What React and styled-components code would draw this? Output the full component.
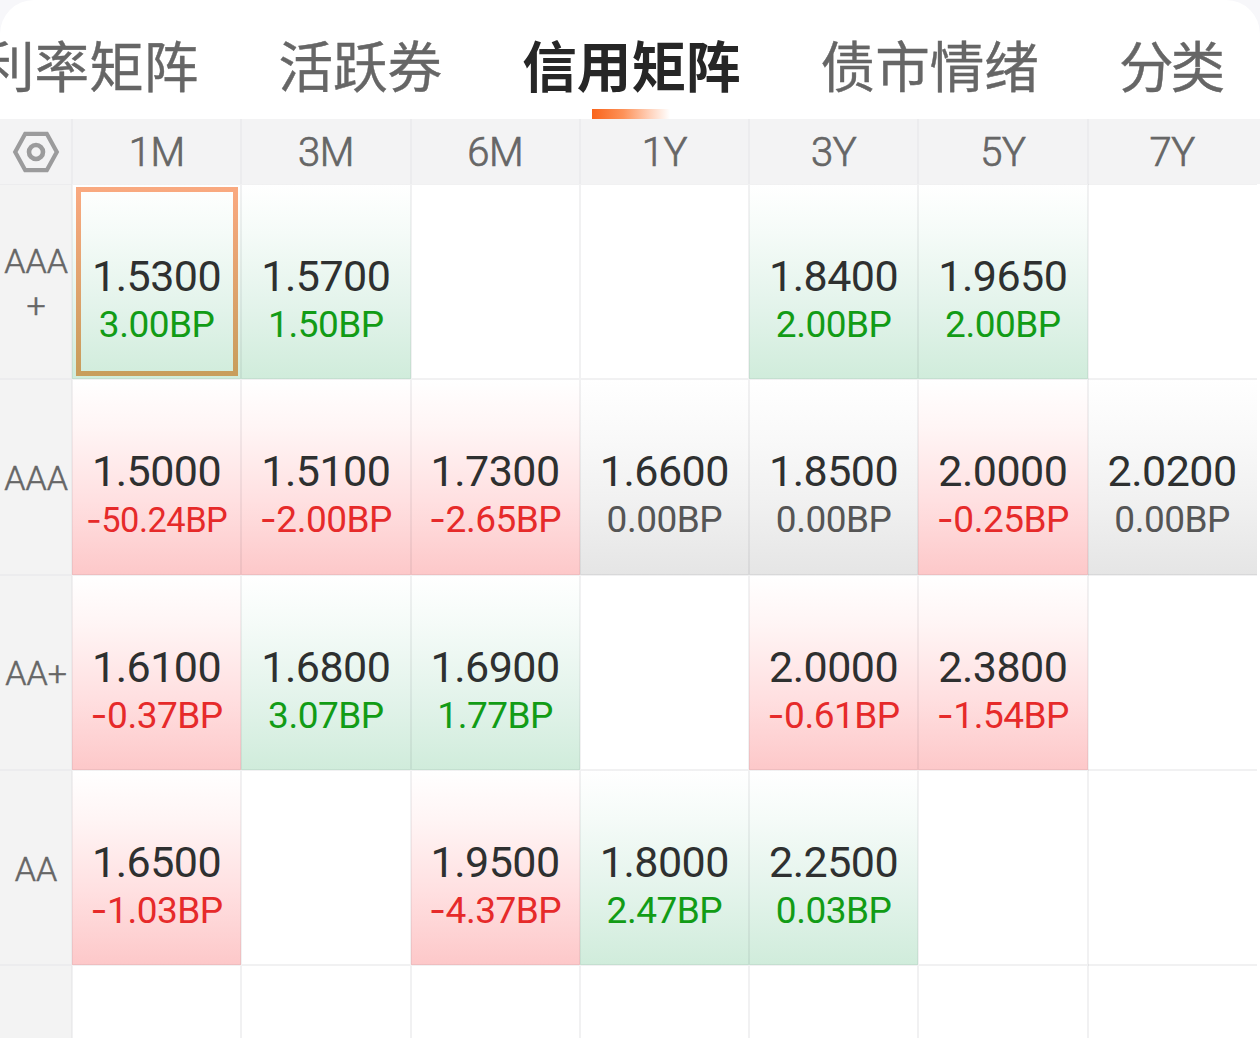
import React from "react";
import styled, { createGlobalStyle, css } from "styled-components";

const TABS = ["利率矩阵", "活跃券", "信用矩阵", "债市情绪", "分类"];
const TERMS = ["1M", "3M", "6M", "1Y", "3Y", "5Y", "7Y"];

const ROWS = [
  {
    label: ["AAA", "+"],
    cells: [["1.5300", "3.00"], ["1.5700", "1.50"], null, null, ["1.8400", "2.00"], ["1.9650", "2.00"], null],
  },
  {
    label: ["AAA"],
    cells: [
      ["1.5000", "-50.24"],
      ["1.5100", "-2.00"],
      ["1.7300", "-2.65"],
      ["1.6600", "0.00"],
      ["1.8500", "0.00"],
      ["2.0000", "-0.25"],
      ["2.0200", "0.00"],
    ],
  },
  {
    label: ["AA+"],
    cells: [["1.6100", "-0.37"], ["1.6800", "3.07"], ["1.6900", "1.77"], null, ["2.0000", "-0.61"], ["2.3800", "-1.54"], null],
  },
  {
    label: ["AA"],
    cells: [["1.6500", "-1.03"], null, ["1.9500", "-4.37"], ["1.8000", "2.47"], ["2.2500", "0.03"], null, null],
  },
  {
    label: [],
    cells: [null, null, null, null, null, null, null],
  },
];

const getTone = (cell) => {
  if (!cell) return "empty";
  const bp = Number(cell[1]);
  if (bp > 0) return "up";
  return bp < 0 ? "down" : "flat";
};

const App = () => {
  return (
    <>
      <GlobalStyle />
      <Screen>
        <TabBar>
          {TABS.map((tab) => (
            <Tab key={tab} $active={tab === "信用矩阵"}>
              {tab}
            </Tab>
          ))}
        </TabBar>
        <Header>
          <Setting>
            <svg width="48" height="42" viewBox="0 0 48 42" fill="none" stroke="#9b9b9c">
              <path d="M13.2 2.8H34.8L44.8 21L34.8 39.2H13.2L3.2 21Z" strokeWidth="4.2" />
              <circle cx="24" cy="21" r="7" strokeWidth="4.6" />
            </svg>
          </Setting>
          {TERMS.map((term) => (
            <Term key={term}>{term}</Term>
          ))}
        </Header>
        {ROWS.map((row, i) => (
          <Row key={i}>
            <Rating>
              {row.label.map((text) => (
                <span key={text}>{text}</span>
              ))}
            </Rating>
            {row.cells.map((cell, j) => (
              <Cell key={j} $tone={getTone(cell)}>
                {cell && (
                  <>
                    <Price>{cell[0]}</Price>
                    <Change $tone={getTone(cell)} $small={cell[1].length > 5}>
                      {cell[1]}BP
                    </Change>
                  </>
                )}
                {i === 0 && j === 0 && <Selected />}
              </Cell>
            ))}
          </Row>
        ))}
      </Screen>
    </>
  );
};

const GlobalStyle = createGlobalStyle`
  * {
    box-sizing: border-box;
  }
  body {
    margin: 0;
    background: #f7f7fa;
    overflow: hidden;
  }
`;

const BACKGROUND = {
  up: "linear-gradient(180deg, #fff 0%, #f5fbf8 25%, #e2f3ea 65%, #d0ecdb 100%)",
  down: "linear-gradient(180deg, #fff 0%, #fff5f5 25%, #ffe0e1 62%, #fdc8c9 100%)",
  flat: "linear-gradient(180deg, #fff 0%, #f9f9f9 30%, #f0f0f0 65%, #e5e5e5 100%)",
  empty: "#fff",
};

const COLOR = {
  up: "#129c16",
  down: "#e62a2a",
  flat: "#555",
};

const gridColumns = css`
  display: grid;
  grid-template-columns: 72px repeat(7, 169.25px);
`;

const Screen = styled.div`
  width: 1260px;
  height: 1038px;
  overflow: hidden;
  background: #fff;
  border-radius: 34px 34px 0 0;
  font-family: Roboto, "Noto Sans CJK SC", sans-serif;
`;

const TabBar = styled.div`
  display: flex;
  gap: 80px;
  height: 119px;
  padding-top: 24px;
  margin-left: -20px;
`;

const Tab = styled.div`
  position: relative;
  flex: none;
  height: 95px;
  font-family: "Noto Sans CJK SC", sans-serif;
  font-size: 54.6px;
  line-height: 80px;
  color: #666;
  -webkit-text-stroke: 0.4px #666;
  &:last-child {
    letter-spacing: -3px;
  }
  ${({ $active }) =>
    $active &&
    css`
      color: #262626;
      font-weight: 700;
      -webkit-text-stroke: 0;
      &::after {
        content: "";
        position: absolute;
        left: 70px;
        bottom: 0;
        width: 78px;
        height: 10px;
        background: linear-gradient(90deg, #f9641b 0%, #fd9259 40%, #ffd3bd 75%, #fff 100%);
      }
    `}
`;

const Header = styled.div`
  ${gridColumns};
  height: 65px;
  background: #f3f3f4;
`;

const Setting = styled.div`
  display: flex;
  align-items: center;
  justify-content: center;
  padding-bottom: 2px;
  box-shadow: inset -1px -2px 0 #ececee;
`;

const Term = styled.div`
  box-shadow: inset 1px 0 0 #ececee, inset -1px -2px 0 #ececee;
  color: #666;
  font-size: 40px;
  font-weight: 300;
  -webkit-text-stroke: 0.7px #666;
  letter-spacing: -0.5px;
  line-height: 67px;
  text-align: center;
  &:last-child {
    box-shadow: inset 1px 0 0 #ececee, inset 0 -2px 0 #ececee;
  }
`;

const Row = styled.div`
  ${gridColumns};
  height: 195.3px;
`;

const Rating = styled.div`
  display: flex;
  flex-direction: column;
  align-items: center;
  justify-content: center;
  padding-top: 2px;
  background: #f3f3f3;
  box-shadow: inset -1px 0 0 #eaeaeb, inset 0 1px 0 #ececee, inset 0 -1px 0 #ececee;
  color: #666;
  font-size: 34px;
  font-weight: 300;
  -webkit-text-stroke: 0.5px #666;
  line-height: 44px;
`;

const Cell = styled.div`
  position: relative;
  display: flex;
  flex-direction: column;
  align-items: center;
  padding-top: 68px;
  background: ${({ $tone }) => BACKGROUND[$tone]};
  box-shadow: inset 0 0 0 1px rgba(20, 20, 40, 0.06);
  &:last-child {
    box-shadow: inset 1px 0 0 rgba(20, 20, 40, 0.06), inset 0 1px 0 rgba(20, 20, 40, 0.06),
      inset 0 -1px 0 rgba(20, 20, 40, 0.06);
  }
`;

const Price = styled.div`
  font-size: 43px;
  letter-spacing: -0.5px;
  line-height: 49px;
  color: #2e3030;
`;

/* the minus sign comes from Inter, its hyphen is wider than the Roboto one */
const Change = styled.div`
  font-size: ${({ $small }) => ($small ? "34.4px" : "37px")};
  letter-spacing: -0.5px;
  line-height: ${({ $small }) => ($small ? "49px" : "47px")};
  color: ${({ $tone }) => COLOR[$tone]};
  &::first-letter {
    font-family: ${({ $tone }) => ($tone === "down" ? "Inter" : "Roboto")}, sans-serif;
    line-height: 1px;
  }
`;

const Selected = styled.div`
  position: absolute;
  top: 3px;
  left: 4px;
  right: 3px;
  bottom: 3px;
  border: 5px solid;
  border-image: linear-gradient(180deg, #f9a980, #c89d5c) 1;
`;

export default App;
